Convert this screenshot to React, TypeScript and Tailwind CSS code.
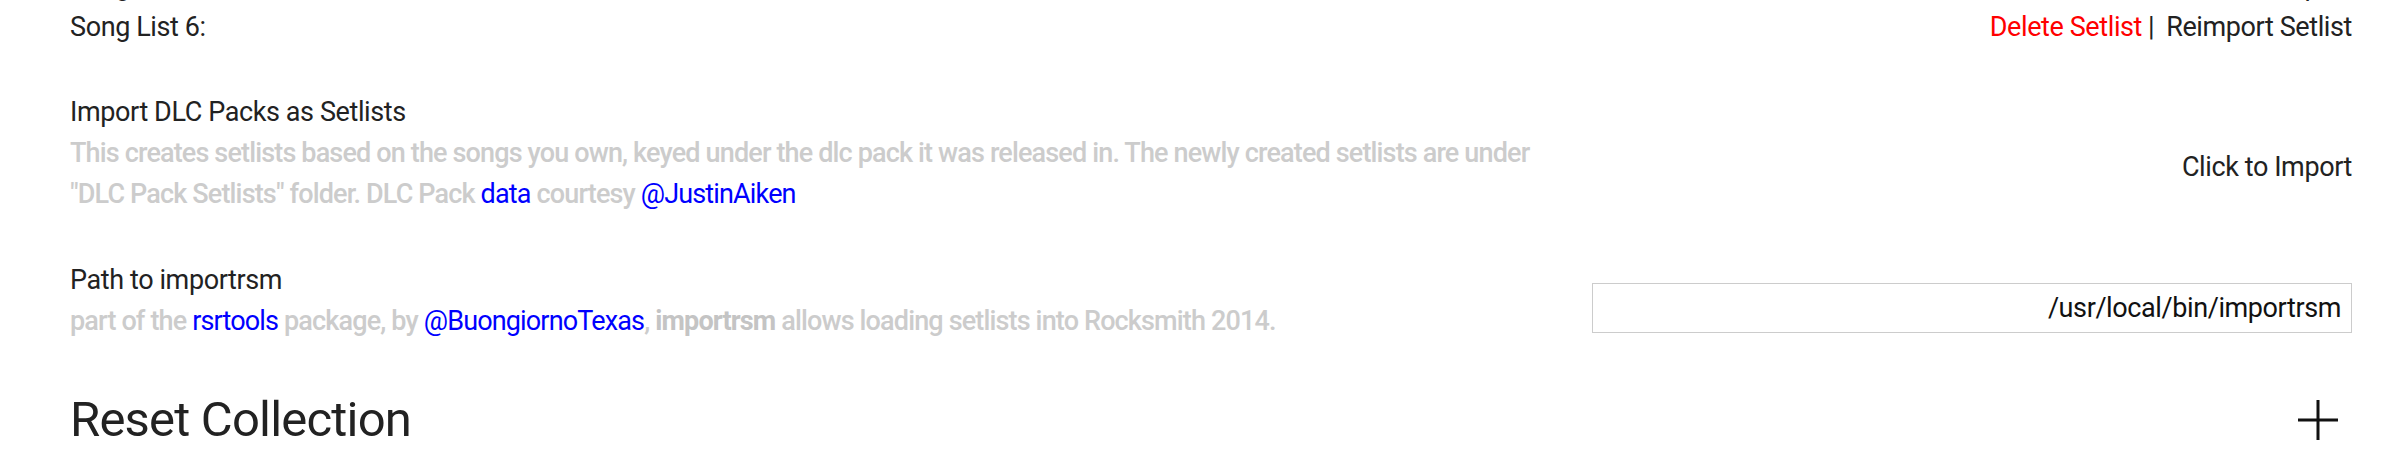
import React from "react";

const font = { fontFamily: "Roboto, 'Open Sans', sans-serif" };

function SetlistRow({ name }: { name: string }) {
  return (
    <div className="flex items-start justify-between leading-[41px]">
      <div className="text-[#222]">{name}</div>
      <div className="flex items-center">
        <span className="text-[#ff0000]">Delete Setlist</span>
        <span className="ml-[6px] text-[#222]">|</span>
        <span className="ml-[12px] text-[#222]">Reimport Setlist</span>
      </div>
    </div>
  );
}

export default function App() {
  return (
    <div
      className="h-[458px] w-full overflow-hidden bg-white text-[27px] tracking-[-0.4px] text-[#222]"
      style={font}
    >
      <div className="pl-[70px] pr-[32px]">
        <div className="-mt-[34px] flex items-start justify-between leading-[41px]">
          <div>Song List 5:</div>
          <div>Click to Import</div>
        </div>
        <SetlistRow name="Song List 6:" />

        <div className="mt-[44px] flex items-start justify-between">
          <div className="leading-[41px]">
            <div className="text-[#222]">Import DLC Packs as Setlists</div>
            <div className="font-medium tracking-[-0.85px] text-[#cccccc]">
              This creates setlists based on the songs you own, keyed under the dlc pack it was released in. The newly created setlists are under
              <br />
              "DLC Pack Setlists" folder. DLC Pack <span className="font-normal text-[#0000ff]">data</span> courtesy{" "}
              <span className="font-normal text-[#0000ff]">@JustinAiken</span>
            </div>
          </div>
          <div className="mt-[55px] leading-[41px] text-[#222]">Click to Import</div>
        </div>

        <div className="mt-[45px] flex items-start justify-between">
          <div className="leading-[41px]">
            <div className="text-[#222]">Path to importrsm</div>
            <div className="font-medium tracking-[-0.85px] text-[#cccccc]">
              part of the <span className="font-normal text-[#0000ff]">rsrtools</span> package, by{" "}
              <span className="font-normal text-[#0000ff]">@BuongiornoTexas</span>,{" "}
              <span className="font-bold text-[#c4c4c4]">importrsm</span> allows loading setlists into Rocksmith 2014.
            </div>
          </div>
          <div className="mt-[23px] flex h-[50px] w-[760px] items-center justify-end border border-[#cccccc] bg-white pr-[10px] text-[#111]">
            /usr/local/bin/importrsm
          </div>
        </div>

        <div className="mt-[49px] flex items-center justify-between">
          <div className="text-[49px] leading-[58px] tracking-[-0.8px] text-[#222]">Reset Collection</div>
          <div className="mr-[14px] flex h-[40px] w-[40px] items-center justify-center">
            <svg width="40" height="40" viewBox="0 0 40 40">
              <path d="M20 0 V40 M0 20 H40" stroke="#111" strokeWidth="3" fill="none" />
            </svg>
          </div>
        </div>
      </div>
    </div>
  );
}
